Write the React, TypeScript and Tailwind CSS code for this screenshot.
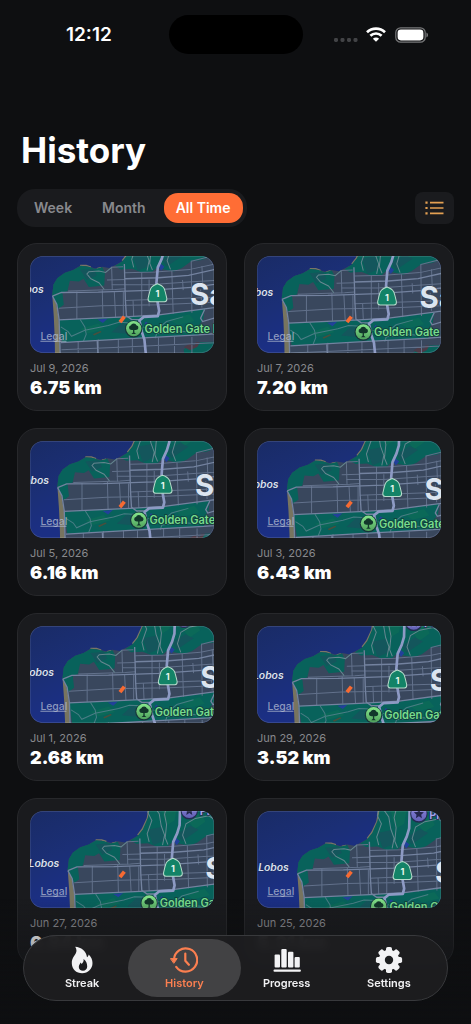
import React from "react";

type Run = { date: string; distance: string };

const runs: Run[] = [
  { date: "Jul 9, 2026", distance: "6.75 km" },
  { date: "Jul 7, 2026", distance: "7.20 km" },
  { date: "Jul 5, 2026", distance: "6.16 km" },
  { date: "Jul 3, 2026", distance: "6.43 km" },
  { date: "Jul 1, 2026", distance: "2.68 km" },
  { date: "Jun 29, 2026", distance: "3.52 km" },
  { date: "Jun 27, 2026", distance: "6.84 km" },
  { date: "Jun 25, 2026", distance: "5.21 km" },
];

function MapDefs() {
  return (
    <svg width="0" height="0" className="absolute" aria-hidden="true">
      <defs>
        <linearGradient id="sea" x1="0" y1="0" x2="1" y2="1">
          <stop offset="0" stopColor="#192b66" />
          <stop offset="0.3" stopColor="#1b2f76" />
          <stop offset="0.5" stopColor="#1b2f84" />
        </linearGradient>
        <linearGradient id="pin" x1="0" y1="0" x2="0" y2="1">
          <stop offset="0" stopColor="#86e58c" />
          <stop offset="1" stopColor="#4fa25c" />
        </linearGradient>
        <linearGradient id="pin2" x1="0" y1="0" x2="0" y2="1">
          <stop offset="0" stopColor="#8a86e0" />
          <stop offset="1" stopColor="#6260b4" />
        </linearGradient>
        <g id="city">
          {/* land */}
          <path fill="#39475d" d="M359-20 352 12 337 47 322 66 300 78 283 86 262 82 240 87 220 80 198 78 175 92 150 100 128 116 116 135 112 168 124 188 130 240 134 300 138 460H700V-40H362Z" />
          {/* beaches */}
          <path fill="none" stroke="#7a7666" strokeWidth="5" d="M357-22 351 14 336 46 322 64" />
          <path fill="none" stroke="#7a7666" strokeWidth="4" d="M196 78 214 78 228 83M246 88l12-3" />
          <path fill="#77745f" d="M113 174 124 190 132 240 136 340 140 460H122L120 300 117 230Z" />
          {/* parks */}
          <g fill="#08625b">
            <path d="M112 168 116 135 128 116 150 100 175 92 198 79 222 82 240 89 262 84 270 100 268 138 222 143 206 118 192 126 165 124 158 155 143 160 147 196 131 208 124 188Z" />
            <path d="M361-30H640V32L590 50 560 62 528 66 500 86 476 96 446 90 426 84 412 97 380 99 352 88 318 90 300 80 322 66 337 47 352 12Z" />
            <path d="M132 241 330 232 432 227 568 208 564 240 548 262 552 286 330 298 142 308Z" />
            <path d="M505 330 520 318 540 318 552 308 600 306V400H520Z" />
          </g>
          <path fill="#0b6958" d="M392-20 440-24 432 20 410 34 398 10ZM470 18l40-24 14 30-32 22ZM462 240l60-16 16 20-50 12ZM196 268l54-16 20 16-50 14Z" />
          <g fill="#14565c">
            <path d="M196 92l40-4 10 20-30 14ZM352 48l40-8 10 40-34 14ZM320 250l50 14-20 20-60-6ZM440 60l40-24 24 12-50 34Z" />
          </g>
          <g fill="#22409a">
            <path d="M248 240 278 237 264 250ZM434 70l14 12-10 12-8-12ZM392 246l14 10-8 4-10-6Z" />
          </g>
          <path fill="#4a4f3c" d="M234 284l22-10 4 3-22 11Z" />
          <path fill="#4d3b48" d="M506 322l18-10 14 6 4-10 12 0-8 14-22 10Z" />
          {/* street grid */}
          <g fill="none" stroke="#62718b" strokeWidth="3">
            <path d="M132 206 260 199 430 196 700 184M330 183 430 179 700 170M290 136 400 136 520 128 640 120M276 122 330 120M290 84 324 82M330 100 420 98 525 90" />
            <path d="M186 156v82M262 150l2 84M290 82l2 70M298 157l4 76M325 158v74M380 98v132M354 182l2 48M402 120v80M470 95l4 128M502 122l2 30M528 64l2 156M560 80l2 50M556 150l4 54M600 60v140" />
            <path d="M160 155 300 150 330 148M525 90 600 74 700 60M528 66 590 50 700 30" />
            <path d="M140 330 330 322 500 314 700 304M250 300v160M310 298v160M352 298v160M430 294v160M478 292v160M530 292v160M190 306v160M140 366 700 340" />
          </g>
          <path fill="none" stroke="#65868f" strokeWidth="3" d="M268 150 252 130 228 118 216 104 222 97 252 95 272 99 290 84M356-30 352-4 364 20 350 60 356 84M368-26 386 0 392 36 402 64 396 94M410-30l-8 32 6 30-4 40 8 20M466 90l-10-26 10-34 28-16 40-8 34 22 60-4M540-30l-14 18 18 12 34-8" />
          <path fill="none" stroke="#4a7d85" strokeWidth="3" d="M138 262 160 276 170 290 210 272 280 258 312 248 350 250M196 240 210 262 214 284 206 304M420 296l10-30 24-20 50-14M384 262l44 20 50-8 56 4" />
          <g fill="none" stroke="#73829f" strokeWidth="4">
            <path d="M113 170 140 159 250 158 400 153 540 143 700 120" />
            <path d="M132 241 330 232 432 226 568 208 700 190M138 309 330 298 550 286 700 274" />
            <path d="M330 118 430 115 520 108 600 90 700 68M328 74 331 180 334 229 350 240 376 240M247 304l2 40M568 210l-12 26 6 10 40-12M113 170 126 194 133 240 136 340 140 460" />
          </g>
          <path fill="none" stroke="#8d9ac4" strokeWidth="8" strokeLinejoin="round" d="M449-40 447 34 440 58 428 84 424 130 426 180 432 214 428 230 386 232 373 243 380 276 388 300 392 340 396 460" />
          {/* labels */}
          <text x="87" y="160" textAnchor="end" fill="#dbe1ef" stroke="#1b2a60" strokeWidth="3" paintOrder="stroke" className="text-[31px] font-semibold italic">Point Lobos</text>
          <text x="388" y="280" fill="#78dc8c" stroke="#123f3c" strokeWidth="5" paintOrder="stroke" className="text-[33px] font-semibold">Golden Gate Park</text>
          <text x="507" y="5" fill="#a7a6ee" stroke="#252b50" strokeWidth="5" paintOrder="stroke" className="text-[33px] font-semibold">Presidio</text>
          <text x="524" y="196" fill="#dce5f0" stroke="#3a475b" strokeWidth="3" paintOrder="stroke" className="text-[88px] font-bold">San</text>
          {/* route shield */}
          <path fill="#138367" stroke="#b7dccb" strokeWidth="3" d="M427 133C436 136 443 140 447 147 450 155 453 168 455 177Q456 186 448 187H406Q398 186 399 177C401 168 404 155 407 147 411 140 418 136 427 133Z" />
          <text x="427" y="174" textAnchor="middle" fill="#e7f6ee" className="text-[27px] font-bold">1</text>
          {/* park pin */}
          <circle cx="356" cy="268" r="26" fill="#17353a" />
          <circle cx="356" cy="267" r="23" fill="url(#pin)" />
          <path fill="#12372b" d="M356 252q7 0 8 5 7 2 6 8-1 6-8 6h-4v8l5 4h-14l5-4v-8h-4q-7 0-8-6-1-6 6-8 1-5 8-5Z" />
          {/* landmark pin */}
          <circle cx="476" cy="-9" r="26" fill="#242a52" />
          <circle cx="476" cy="-10" r="23" fill="url(#pin2)" />
          <path fill="#23264c" d="M476-25l4 10 11 1-8 7 2 11-9-6-9 6 2-11-8-7 11-1Z" />
        </g>
      </defs>
    </svg>
  );
}

function RouteMap({ index }: { index: number }) {
  return (
    <svg
      viewBox="0 0 552 290"
      preserveAspectRatio="xMidYMid slice"
      className="block h-[97px] w-full rounded-[13px]"
      role="img"
      aria-label="Route map"
    >
      <rect width="552" height="290" fill="url(#sea)" />
      <use href="#city" transform={`translate(${index * 7.7 - 45} ${index * 9.7 - 50})`} />
      <path stroke="#f76a32" strokeWidth="11" d="M270 198 283 181" />
      <text x="32" y="251" fill="#b4bdd2" fillOpacity="0.75" className="text-[31px] font-medium">
        Legal
      </text>
      <path stroke="#b4bdd2" strokeOpacity="0.75" strokeWidth="3" d="M32 255H110" />
      <rect x="1" y="1" width="550" height="288" rx="38" fill="none" stroke="#ffffff" strokeOpacity="0.16" strokeWidth="3" />
    </svg>
  );
}

function RunCard({ run, index }: { run: Run; index: number }) {
  return (
    <a
      href="#run"
      className="block h-[168px] min-w-0 rounded-[20px] border border-[#27282b] bg-[#1a1b1e] p-3"
    >
      <RouteMap index={index} />
      <p className="mt-[7px] text-[11px] leading-4 text-[#88898d]">{run.date}</p>
      <p className="text-lg leading-6 font-black text-white">{run.distance}</p>
    </a>
  );
}

function StatusBar() {
  return (
    <div className="grid grid-cols-[1fr_134px_1fr] items-center pt-[15px]">
      <span className="pl-[66px] text-[19px] leading-6 font-semibold">12:12</span>
      <div className="h-[39px] rounded-full bg-black" />
      <div className="flex items-center justify-end gap-2 pr-[42px]">
        <svg width="24" height="14" viewBox="0 0 24 14" fill="#424346" aria-hidden="true">
          <rect x="0" y="10" width="4" height="4" rx="1.4" />
          <rect x="6.5" y="10" width="4" height="4" rx="1.4" />
          <rect x="13" y="10" width="4" height="4" rx="1.4" />
          <rect x="19.5" y="10" width="4" height="4" rx="1.4" />
        </svg>
        <svg width="20" height="15" viewBox="0 0 20 15" fill="none" stroke="#fff" strokeWidth="2.7" aria-hidden="true">
          <path d="M1 5.3a13 13 0 0 1 18 0" />
          <path d="M4.4 8.8a8 8 0 0 1 11.2 0" />
          <path fill="#fff" stroke="none" d="M10 14.8 6.9 11.7a4.4 4.4 0 0 1 6.2 0Z" />
        </svg>
        <svg width="35" height="16" viewBox="-1 0 35 16" aria-hidden="true">
          <rect x="0.8" y="0.8" width="29.4" height="14.4" rx="4.8" fill="none" stroke="#77787a" strokeWidth="1.2" />
          <rect x="2.6" y="2.6" width="25.8" height="10.8" rx="3.3" fill="#fff" />
          <path d="M31.4 5.4v5.2q1.7-.8 1.7-2.6t-1.7-2.6Z" fill="#77787a" />
        </svg>
      </div>
    </div>
  );
}

function FlameIcon() {
  return (
    <svg width="26" height="28" viewBox="0 0 26 28" aria-hidden="true">
      <path
        fill="#f2f2f4"
        fillRule="evenodd"
        d="M6.2 0.8C12 1.2 17.3 4.8 18 11.2c1-.6 1.5-1.5 1.7-2.7 2.6 2.4 3.8 5.6 3.8 8.6 0 6-4.4 10.2-10.3 10.2S2.8 23.2 2.8 17.3C2.8 12.5 5.2 10.3 6.7 7.6 7.9 5.4 7.7 3 6.2 0.8ZM14.6 13c.3 2.5-.7 3.8-2 5.1-.2-.7-.6-1.2-1.2-1.6-.1 1.4-1.6 2.3-1.6 4.4 0 2.3 1.8 3.8 4.2 3.8s4.2-1.5 4.2-4.2c0-3-1.1-5.7-3.6-7.5Z"
      />
    </svg>
  );
}

function HistoryIcon() {
  return (
    <svg width="28" height="28" viewBox="0 0 28 28" fill="none" stroke="#fb7f50" strokeWidth="2.2" strokeLinecap="round" strokeLinejoin="round" aria-hidden="true">
      <path d="M4 13.5A11.6 11.6 0 1 1 6.2 20.8" />
      <path fill="#fb7f50" strokeWidth="1" d="M0.8 12.6H7.2L4 17Z" />
      <path d="M15.3 7.5v7.3l3.6 4" />
    </svg>
  );
}

function BarsIcon() {
  return (
    <svg width="28" height="28" viewBox="0 0 28 28" fill="#f2f2f4" aria-hidden="true">
      <rect x="1.6" y="8.4" width="5.4" height="13.2" rx="1" />
      <rect x="8.3" y="2.9" width="5.4" height="18.7" rx="1" />
      <rect x="15" y="5.8" width="5.4" height="15.8" rx="1" />
      <rect x="21.6" y="11" width="5.2" height="10.6" rx="1" />
      <rect x="0.5" y="23.4" width="27.4" height="2.3" rx="1" />
    </svg>
  );
}

function GearIcon() {
  return (
    <svg width="28" height="28" viewBox="0 0 28 28" aria-hidden="true">
      <g fill="#f2f2f4">
        {[0, 45, 90, 135].map((angle) => (
          <rect key={angle} x="11" y="0.9" width="6" height="26.2" rx="1.8" transform={`rotate(${angle} 14 14)`} />
        ))}
        <circle cx="14" cy="14" r="10.2" />
      </g>
      <circle cx="14" cy="14" r="4.2" fill="#1d1e20" />
    </svg>
  );
}

const tabs = [
  { label: "Streak", icon: <FlameIcon /> },
  { label: "History", icon: <HistoryIcon />, active: true },
  { label: "Progress", icon: <BarsIcon /> },
  { label: "Settings", icon: <GearIcon /> },
];

function TabBar() {
  return (
    <nav className="fixed inset-x-[23px] bottom-[23px] flex rounded-full border border-[#38393c] bg-[#1d1e20]/95 px-[7px] py-[3px] backdrop-blur-xs">
      {tabs.map((tab) => (
        <a
          key={tab.label}
          href="#tab"
          className={
            tab.active
              ? "-mx-[5px] flex h-[58px] flex-[112] flex-col items-center rounded-full bg-[#424244] pt-[7px] text-[#fb7f50]"
              : "flex h-[58px] flex-[102] flex-col items-center pt-[7px] text-[#f2f2f4]"
          }
        >
          {tab.icon}
          <span className="text-[11px] leading-[18px] font-semibold">{tab.label}</span>
        </a>
      ))}
    </nav>
  );
}

export default function App() {
  return (
    <div className="relative min-h-screen bg-[#0e0f11] pb-[58px] font-['Inter',sans-serif] text-white">
      <MapDefs />
      <StatusBar />
      <main className="px-[17px] pt-[74px]">
        <h1 className="pl-1 text-[35px] leading-[44px] font-bold">History</h1>
        <div className="mt-[17px] flex items-center justify-between">
          <div className="flex gap-1.5 rounded-[18px] bg-[#1a1b1e] p-1 pl-[5px] text-sm leading-[30px] font-semibold text-[#88898d]">
            <button type="button" className="rounded-full px-3">Week</button>
            <button type="button" className="rounded-full px-3">Month</button>
            <button type="button" className="rounded-[14px] bg-[#ff6d35] px-3 text-white">All Time</button>
          </div>
          <button type="button" aria-label="List view" className="flex h-8 w-[39px] items-center justify-center rounded-lg bg-[#1a1b1e]">
            <svg width="19" height="14" viewBox="0 0 19 14" fill="#e3a052" aria-hidden="true">
              <path d="M5 .8H18.500V2.400H5ZM5 6.200H18.500V7.800H5ZM5 11.600H18.500V13.200H5Z" />
              <path d="M.4.500H2.600V2.700H.4ZM.4 5.900H2.600V8.100H.4ZM.4 11.300H2.600V13.500H.4Z" />
            </svg>
          </button>
        </div>
        <div className="mt-4 grid grid-cols-2 gap-[17px]">
          {runs.map((run, i) => (
            <RunCard key={run.date} run={run} index={i} />
          ))}
        </div>
      </main>
      <div className="pointer-events-none fixed inset-x-0 bottom-0 h-[125px] bg-linear-to-b from-[#0e0f11]/0 via-[#0e0f11]/45 to-[#0e0f11]" />
      <TabBar />
    </div>
  );
}
